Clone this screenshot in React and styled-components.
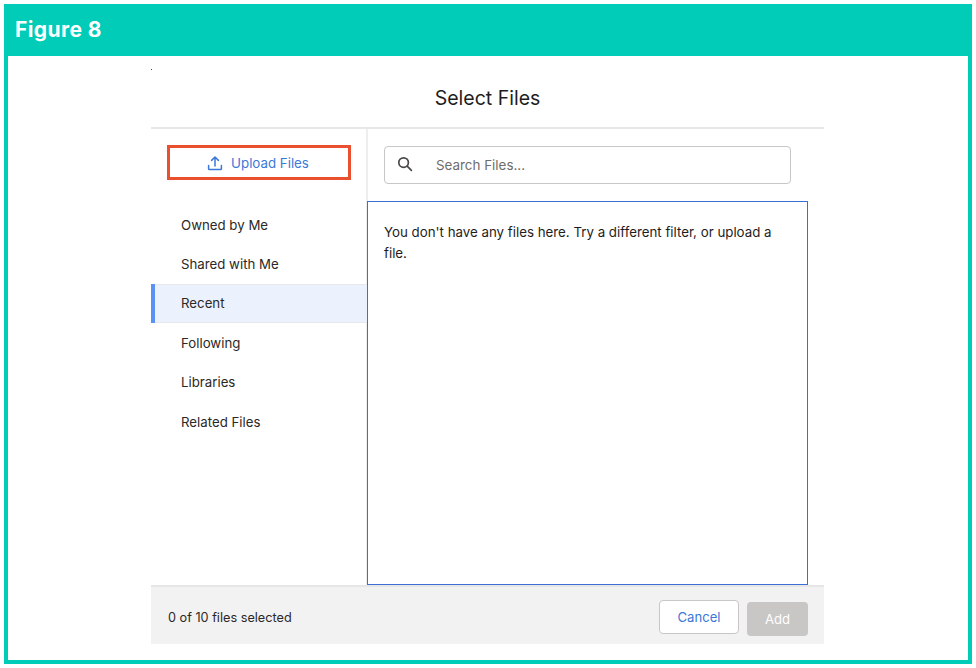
import React from 'react'
import styled, { createGlobalStyle } from 'styled-components'

const Global = createGlobalStyle`
  html, body {
    margin: 0;
    padding: 0;
    background: #fff;
  }
  body {
    font-family: "Inter", "Liberation Sans", sans-serif;
    color: #2b2826;
  }
`

const Page = styled.div`
  width: 976px;
  height: 668px;
  padding: 4px;
  box-sizing: border-box;
`

const Frame = styled.div`
  height: 660px;
  width: 968px;
  box-sizing: border-box;
  border: 4px solid #00ccb8;
  display: flex;
  flex-direction: column;
`

const Banner = styled.div`
  height: 52px;
  flex: none;
  margin-top: -4px;
  padding: 1px 7px 3px;
  box-sizing: border-box;
  background: #00ccb8;
  color: #fff;
  font-size: 21px;
  font-weight: 700;
  letter-spacing: 0.4px;
  display: flex;
  align-items: center;
`

const Content = styled.div`
  flex: 1;
  padding: 13px 144px 16px 143px;
  display: flex;
  flex-direction: column;
  min-height: 0;
`

const Speck = styled.div`
  width: 1px;
  height: 1px;
  background: #444;
`

const Title = styled.h2`
  margin: 0;
  height: 59px;
  flex: none;
  box-sizing: border-box;
  border-bottom: 2px solid #e8e8e8;
  display: flex;
  align-items: center;
  justify-content: center;
  padding-bottom: 2px;
  font-size: 19.5px;
  font-weight: 400;
  color: #1f1d1c;
`

const Body = styled.div`
  flex: 1;
  display: flex;
  min-height: 0;
`

const Sidebar = styled.div`
  width: 217px;
  flex: none;
  box-sizing: border-box;
  border-right: 2px solid #eeeeee;
  padding-top: 16px;
`

const UploadButton = styled.button`
  display: flex;
  align-items: center;
  justify-content: center;
  gap: 8px;
  width: 184px;
  height: 35px;
  margin: 0 0 25px 16px;
  box-sizing: border-box;
  border: 3px solid #ea4f30;
  background: #fff;
  color: #3b78d8;
  font: inherit;
  font-size: 13.3px;
  padding: 0 2px 0 0;
`

const NavList = styled.div`
  display: flex;
  flex-direction: column;
  margin-right: -1px;
`

const NavItem = styled.div`
  height: 39.4px;
  box-sizing: border-box;
  display: flex;
  align-items: center;
  padding-left: ${p => (p.$active ? '26px' : '30px')};
  font-size: 13.25px;
  color: #2b2826;
  background: ${p => (p.$active ? '#ebf2fd' : 'transparent')};
  border-left: ${p => (p.$active ? '4px solid #5a93f5' : 'none')};
  box-shadow: ${p => (p.$active ? 'inset 0 1px 0 #e6e8ec, inset 0 -1px 0 #e6e8ec' : 'none')};
`

const Main = styled.div`
  flex: 1;
  min-width: 0;
  display: flex;
  flex-direction: column;
  margin-left: -1px;
  margin-right: 16px;
`

const SearchRow = styled.div`
  height: 72px;
  flex: none;
  box-sizing: border-box;
  padding: 17px;
`

const SearchBox = styled.div`
  height: 38px;
  box-sizing: border-box;
  border: 1px solid #c9c7c5;
  border-radius: 4px;
  display: flex;
  align-items: center;
  padding: 0 0 0 12px;
  gap: 23px;
  color: #6f6d6b;
  font-size: 13.4px;
`

const SearchIcon = styled.svg`
  flex: none;
  width: 16px;
  height: 16px;
  margin-top: -3px;
`

const Results = styled.div`
  flex: 1;
  box-sizing: border-box;
  border: 1px solid #3b6fd6;
  padding: 20px 16px;
  font-size: 13.3px;
  line-height: 21px;
  color: #1f1d1c;
`

const Footer = styled.div`
  height: 59px;
  flex: none;
  box-sizing: border-box;
  background: #f2f2f2;
  border-top: 2px solid #e6e6e6;
  display: flex;
  align-items: center;
  justify-content: space-between;
  padding: 4px 16px 0 17px;
  font-size: 12.7px;
  color: #2b2826;
`

const Actions = styled.div`
  display: flex;
  align-items: flex-start;
  gap: 8px;
`

const CancelButton = styled.button`
  width: 80px;
  height: 34px;
  box-sizing: border-box;
  border: 1px solid #c9c7c5;
  border-radius: 4px;
  background: #fff;
  color: #3b78d8;
  font: inherit;
  font-size: 13.1px;
  padding: 0;
`

const AddButton = styled.button`
  width: 61px;
  height: 34px;
  margin-top: 2px;
  box-sizing: border-box;
  border: none;
  border-radius: 4px;
  background: #c9c7c5;
  color: #fff;
  font: inherit;
  font-size: 13.1px;
  padding: 0;
`

const navItems = ['Owned by Me', 'Shared with Me', 'Recent', 'Following', 'Libraries', 'Related Files']

const App = () => {
  return (
    <>
      <Global />
      <Page>
        <Frame>
          <Banner>Figure 8</Banner>
          <Content>
            <Speck />
            <Title>Select Files</Title>
            <Body>
              <Sidebar>
                <UploadButton>
                  <svg width="16" height="16" viewBox="0 0 16 16" fill="none" stroke="#3b78d8" strokeWidth="1.5">
                    <path d="M8 11V2.2M4.6 5.4 8 2l3.4 3.4" strokeLinecap="round" strokeLinejoin="round" />
                    <path d="M1.6 10.5v3.2c0 .5.4.9.9.9h11c.5 0 .9-.4.9-.9v-3.2" strokeLinecap="round" />
                  </svg>
                  Upload Files
                </UploadButton>
                <NavList>
                  {navItems.map(item => (
                    <NavItem key={item} $active={item === 'Recent'}>{item}</NavItem>
                  ))}
                </NavList>
              </Sidebar>
              <Main>
                <SearchRow>
                  <SearchBox>
                    <SearchIcon viewBox="0 0 16 16" fill="none" stroke="#4a4846" strokeWidth="1.7">
                      <circle cx="6.6" cy="6.6" r="4.8" />
                      <path d="M10.2 10.2 14.4 14.4" strokeLinecap="round" />
                    </SearchIcon>
                    Search Files...
                  </SearchBox>
                </SearchRow>
                <Results>You don't have any files here. Try a different filter, or upload a file.</Results>
              </Main>
            </Body>
            <Footer>
              <span>0 of 10 files selected</span>
              <Actions>
                <CancelButton>Cancel</CancelButton>
                <AddButton>Add</AddButton>
              </Actions>
            </Footer>
          </Content>
        </Frame>
      </Page>
    </>
  )
}

export default App
